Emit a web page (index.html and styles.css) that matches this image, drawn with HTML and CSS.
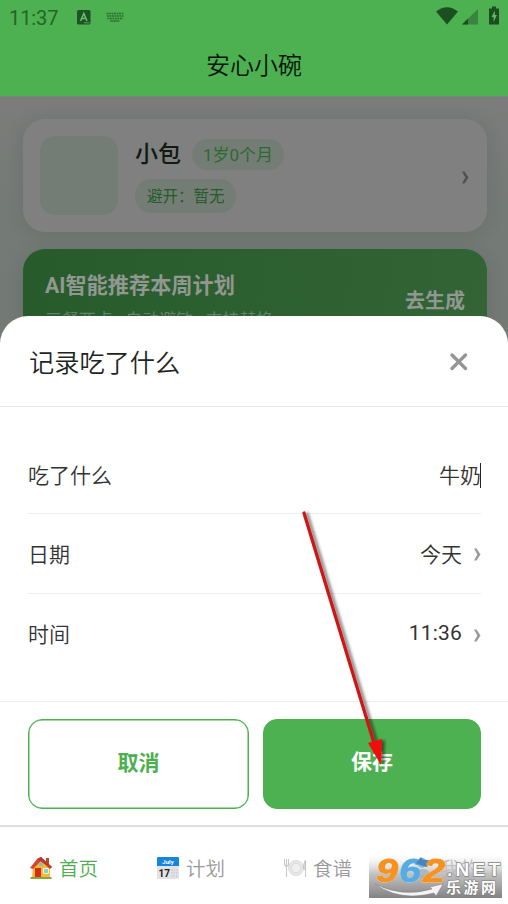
FILE: index.html
```html
<!DOCTYPE html>
<html lang="zh-CN">
<head>
<meta charset="utf-8">
<title>安心小碗</title>
<link rel="stylesheet" href="styles.css">
</head>
<body>
<div class="phone">
  <header class="top">
    <div class="status">
      <span class="clock">11:37</span>
      <svg class="ime" width="14" height="15" viewBox="0 0 14 15"><rect width="13.5" height="14.5" rx="1.5" fill="#1d5423"/><path d="M3.5 11 6.8 3.5 10 11M4.7 8.5H9" fill="none" stroke="#69bd6c" stroke-width="1.5"/><path d="M7 12.8H12.5" stroke="#69bd6c" stroke-width=".8"/></svg>
      <svg class="keyboard" width="18" height="10" viewBox="0 0 18 10" fill="none" stroke="#286b2d"><path d="M.5 1.5H18M1 4H17.5M1.5 6.5H17" stroke-width="1.7" stroke-dasharray="1.8 .7"/><path d="M4 9H13.5" stroke-width="1.2"/></svg>
      <svg class="signals" width="64" height="20" viewBox="0 0 64 20"><path d="M0 5.5Q11-3 22 5.5L11 18.5Z" fill="#1b4f20"/><path d="M26 18.5 42 3V18.5Z" fill="#38863d"/><path d="M26 18.5 32 12.5V18.5Z" fill="#1b4f20"/><path d="M53 2.5H56V.5H60V2.5H63V18.5H53Z" fill="#1b4f20"/><path d="M58.8 4.5 55.5 11H57.6V16L60.9 9H58.8Z" fill="#63b767"/></svg>
    </div>
    <h1 class="app-title">安心小碗</h1>
  </header>
  <main class="page">
    <section class="profile">
      <div class="avatar"></div>
      <div class="info">
        <div class="name-line"><span class="name">小包</span><span class="age">1岁0个月</span></div>
        <span class="avoid">避开：暂无</span>
      </div>
      <svg class="chevron" width="7" height="13" viewBox="0 0 7 13"><path d="M0 .5H2.5L6.5 6.5 2.5 12.5H0L3.4 6.5Z"/></svg>
    </section>
    <section class="promo">
      <div><h2>AI智能推荐本周计划</h2><p>三餐两点 · 自动避敏 · 支持替换</p></div>
      <span class="generate">去生成</span>
    </section>
  </main>
  <section class="sheet">
    <div class="sheet-head">
      <h2>记录吃了什么</h2>
      <svg width="18" height="18" viewBox="0 0 18 18"><path d="M2 2 15.5 15.5M15.5 2 2 15.5" fill="none" stroke="#949494" stroke-width="3.2" stroke-linecap="round"/></svg>
    </div>
    <div class="form">
      <div class="row"><span class="cjk">吃了什么</span><span class="value cjk">牛奶</span><i class="caret"></i></div>
      <div class="row"><span>日期</span><span class="value">今天</span><svg class="chevron" width="7" height="13" viewBox="0 0 7 13"><path d="M0 .5H2.5L6.5 6.5 2.5 12.5H0L3.4 6.5Z"/></svg></div>
      <div class="row"><span>时间</span><span class="value time">11:36</span><svg class="chevron" width="7" height="13" viewBox="0 0 7 13"><path d="M0 .5H2.5L6.5 6.5 2.5 12.5H0L3.4 6.5Z"/></svg></div>
    </div>
    <div class="actions">
      <button class="btn cancel">取消</button>
      <button class="btn save">保存</button>
    </div>
  </section>
  <nav class="tabs">
    <div class="tab active">
      <svg width="24" height="24" viewBox="0 0 24 24"><path d="M4 10 12 3 21 10V22H3Z" fill="#fbb829"/><path d="M17 2H20V8H17Z" fill="#b74c20"/><path d="M1 12 8 3 12 1 23 11 21 13 12 5 4 13Z" fill="#d44732"/><path d="M8 3 12 1 23 11 21.5 12Z" fill="#b83a32"/><path d="M6 12H12V22H6Z" fill="#d52c19"/><path d="M14.5 12.5H19.5V17.5H14.5Z" fill="#75d3f4" stroke="#fff3bd"/><circle cx="12" cy="8.5" r="2" fill="#75c6d5"/><path d="M1.5 21H22.5V23H1.5Z" fill="#83a744"/></svg>
      <span>首页</span>
    </div>
    <div class="tab">
      <svg width="24" height="24" viewBox="0 0 24 24"><rect x="1" y="1" width="22" height="22" rx="1" fill="#e1e3e4"/><path d="M1 2Q1 1 2 1H22Q23 1 23 2V10H1Z" fill="#1785df"/><text x="12" y="7.7" text-anchor="middle" class="cal-month">July</text><text x="8.3" y="20.7" text-anchor="middle" class="cal-day">17</text><path d="M15 14H22M15 17H22M15 20H22" stroke="#c9cccd" stroke-width="1.5" stroke-dasharray="1.5 1"/></svg>
      <span>计划</span>
    </div>
    <div class="tab">
      <svg width="24" height="24" viewBox="0 0 24 24"><circle cx="13" cy="12" r="7.5" fill="#e9e9e9" stroke="#dcdcdc"/><circle cx="13" cy="12" r="4.8" fill="#efefef" stroke="#d8d8d8"/><path d="M1.5 3V8Q1.5 10 3.5 10T5.5 8V3M3.5 3V21" fill="none" stroke="#c8c8c8" stroke-width="1.1"/><path d="M22.5 21V4Q20 8 20.5 13H22.5" fill="#ddd" stroke="#c4c4c4"/></svg>
      <span>食谱</span>
    </div>
    <div class="tab">
      <svg width="24" height="24" viewBox="0 0 24 24"><circle cx="12" cy="7" r="5" fill="#437fab"/><path d="M3 22Q3 13 12 13T21 22Z" fill="#437fab"/></svg>
      <span>我的</span>
    </div>
  </nav>
  <svg class="arrow" width="90" height="266" viewBox="0 0 90 266">
    <defs><filter id="shade" x="-20%" y="-10%" width="150%" height="120%"><feDropShadow dx="3" dy="1" stdDeviation="1.8" flood-color="#000" flood-opacity=".5"/></filter></defs>
    <g filter="url(#shade)"><path d="M4 5 74 235" stroke="#cf1719" stroke-width="3.3" stroke-linecap="round"/><path d="M68 235 82 231 81 257Z" fill="#f20b0b"/></g>
  </svg>
  <svg class="watermark" width="133" height="44" viewBox="0 0 133 44">
    <defs><linearGradient id="steel" x2="0" y2="1"><stop stop-color="#fff" stop-opacity=".25"/><stop offset=".45" stop-color="#bbb" stop-opacity=".9"/><stop offset="1" stop-color="#828282"/></linearGradient></defs>
    <rect width="133" height="44" fill="url(#steel)"/>
    <g class="digits"><text x="7" y="27.5" textLength="22" lengthAdjust="spacingAndGlyphs" fill="#f49322" stroke="#f49322">9</text><text x="30" y="27.5" textLength="22" lengthAdjust="spacingAndGlyphs" fill="#56ace3" stroke="#56ace3">6</text><text x="54" y="27.5" textLength="22" lengthAdjust="spacingAndGlyphs" fill="#f49322" stroke="#f49322">2</text></g>
    <path d="M47 9 52 3 54 6 60 6 57 10 59 13 53 12Z" fill="#4586bf"/>
    <text x="78" y="22" textLength="53" class="net">.NET</text>
    <text x="77" y="39" textLength="50" class="brand">乐游网</text>
    <path d="M6 30Q33 44 63 35L61 33 74 30 67 42 65 39Q31 48 6 30Z" fill="#f4f4f4" stroke="#777" stroke-width=".4"/>
  </svg>
</div>
</body>
</html>
```
FILE: styles.css
```css
* { box-sizing: border-box; }
body { margin: 0; font-family: Roboto, "Noto Sans CJK SC", sans-serif; }
h1, h2, p { margin: 0; font-weight: 400; }
svg { display: block; flex: none; }
.phone { position: relative; width: 508px; height: 904px; overflow: hidden; display: flex; flex-direction: column; background: #fff; }
.top { height: 96px; flex: none; background: #4db151; }
.status { height: 35px; padding: 0 9px; display: flex; align-items: center; }
.clock { width: 68px; color: #246529; font-size: 20px; letter-spacing: -.1px; }
.ime { margin-top: -1px; }
.keyboard { margin-left: 15px; margin-top: -1px; }
.signals { margin-left: auto; margin-right: -1px; margin-top: -3px; }
.app-title { text-align: center; color: #061307; font-size: 24px; line-height: 63px; font-weight: 350; }
.page { height: 729px; flex: none; padding: 22px 21px 0 23px; background: linear-gradient(#7b7c7b, #747a76 130px, #747775); border-top: 1px solid #71897a; }
.profile { height: 113px; border-radius: 22px; background: #808080; box-shadow: 0 2px 18px rgba(38, 55, 43, .14); padding: 0 18px 0 17px; display: flex; align-items: center; }
.avatar { width: 78px; height: 79px; border-radius: 15px; background: #747d75; }
.info { margin-left: 17px; flex: 1; }
.name-line { display: flex; align-items: center; gap: 11px; }
.name { color: #111a13; font-size: 23px; line-height: 31px; font-weight: 500; }
.age { height: 31px; padding: 0 11px; border-radius: 16px; background: #747d75; color: #2c6a30; font-size: 17px; line-height: 32px; }
.avoid { display: inline-block; vertical-align: top; height: 34px; margin-top: 9px; padding: 0 11px 0 12px; border-radius: 16px; background: #747d75; color: #265b29; font-size: 15.5px; line-height: 36px; }
.chevron { fill: #999; }
.profile .chevron { fill: #505050; margin-top: 3px; }
.promo { height: 112px; margin-top: 17px; padding: 21px 22px 0; border-radius: 22px; background: linear-gradient(100deg, #285b2b, #326436); box-shadow: 0 3px 18px rgba(38, 55, 43, .16); display: flex; justify-content: space-between; color: #919791; }
.promo h2 { font-size: 21.2px; line-height: 31px; font-weight: 700; }
.promo p { margin-top: 7px; font-size: 16.9px; line-height: 24px; color: #63826a; }
.generate { padding-top: 16px; font-size: 20px; line-height: 31px; font-weight: 700; }
.sheet { position: absolute; top: 316px; left: 0; width: 508px; height: 509px; border-radius: 28px 28px 0 0; background: #fff; }
.sheet-head { height: 91px; padding: 0 40px 0 29px; border-bottom: 1px solid #e9ebe9; display: flex; align-items: center; justify-content: space-between; color: #1e251f; }
.sheet-head h2 { padding-top: 5px; font-size: 25.2px; line-height: 40px; font-weight: 350; }
.sheet-head svg { margin-top: 1px; }
.form { height: 294px; padding: 27px 27px 0 28px; }
.row { height: 80px; display: flex; align-items: center; border-bottom: 1px solid #ededed; color: #333; font-size: 21px; line-height: 30px; }
.row:last-child { border-bottom: 0; }
.row > span { padding-top: 2px; font-weight: 350; }
.row > .cjk { padding-top: 4px; }
.value { margin-left: auto; }
.row > .time { padding: 0 0 2px; letter-spacing: .2px; font-weight: 400; }
.row .chevron { margin-left: 12px; margin-top: 2px; }
.caret { width: 1px; height: 25px; margin-left: -1px; margin-top: 4px; background: #222; }
.actions { height: 125px; padding: 17px 27px 18px 28px; border-top: 1px solid #eee; display: flex; gap: 14px; }
.btn { height: 90px; padding: 0 0 6px; border: 1.5px solid #4daf50; border-radius: 14px; font: 700 21px Roboto, "Noto Sans CJK SC", sans-serif; }
.cancel { width: 221px; background: #fff; color: #4daf50; box-shadow: inset 0 0 0 .5px #4daf50; }
.save { width: 218px; padding-bottom: 8px; background: #4db151; color: #fff; }
.tabs { height: 79px; flex: none; border-top: 2px solid #dedede; background: #fff; display: flex; }
.tab { width: 127px; display: flex; align-items: center; justify-content: center; gap: 6px; color: #999; font-size: 19.5px; }
.tab span { padding-top: 3px; font-weight: 350; }
.tab svg { margin-top: 4px; }
.tab.active { color: #4daf50; }
.cal-month { font: 700 6px Roboto, sans-serif; fill: #fff; }
.cal-day { font: 700 10px Roboto, sans-serif; fill: #222; }
.arrow { position: absolute; top: 508px; left: 300px; }
.watermark { position: absolute; top: 854px; left: 369px; }
.digits { font: italic 700 33px "Liberation Sans", sans-serif; stroke-width: 1px; filter: drop-shadow(0 0 .6px #fff); }
.net { font: 700 19px "Liberation Sans", sans-serif; fill: #fff; stroke: #858585; stroke-width: 1.5px; paint-order: stroke; }
.brand { font: 700 15px "Noto Sans CJK SC", sans-serif; fill: #fff; stroke: #777; stroke-width: 1px; paint-order: stroke; }
```
